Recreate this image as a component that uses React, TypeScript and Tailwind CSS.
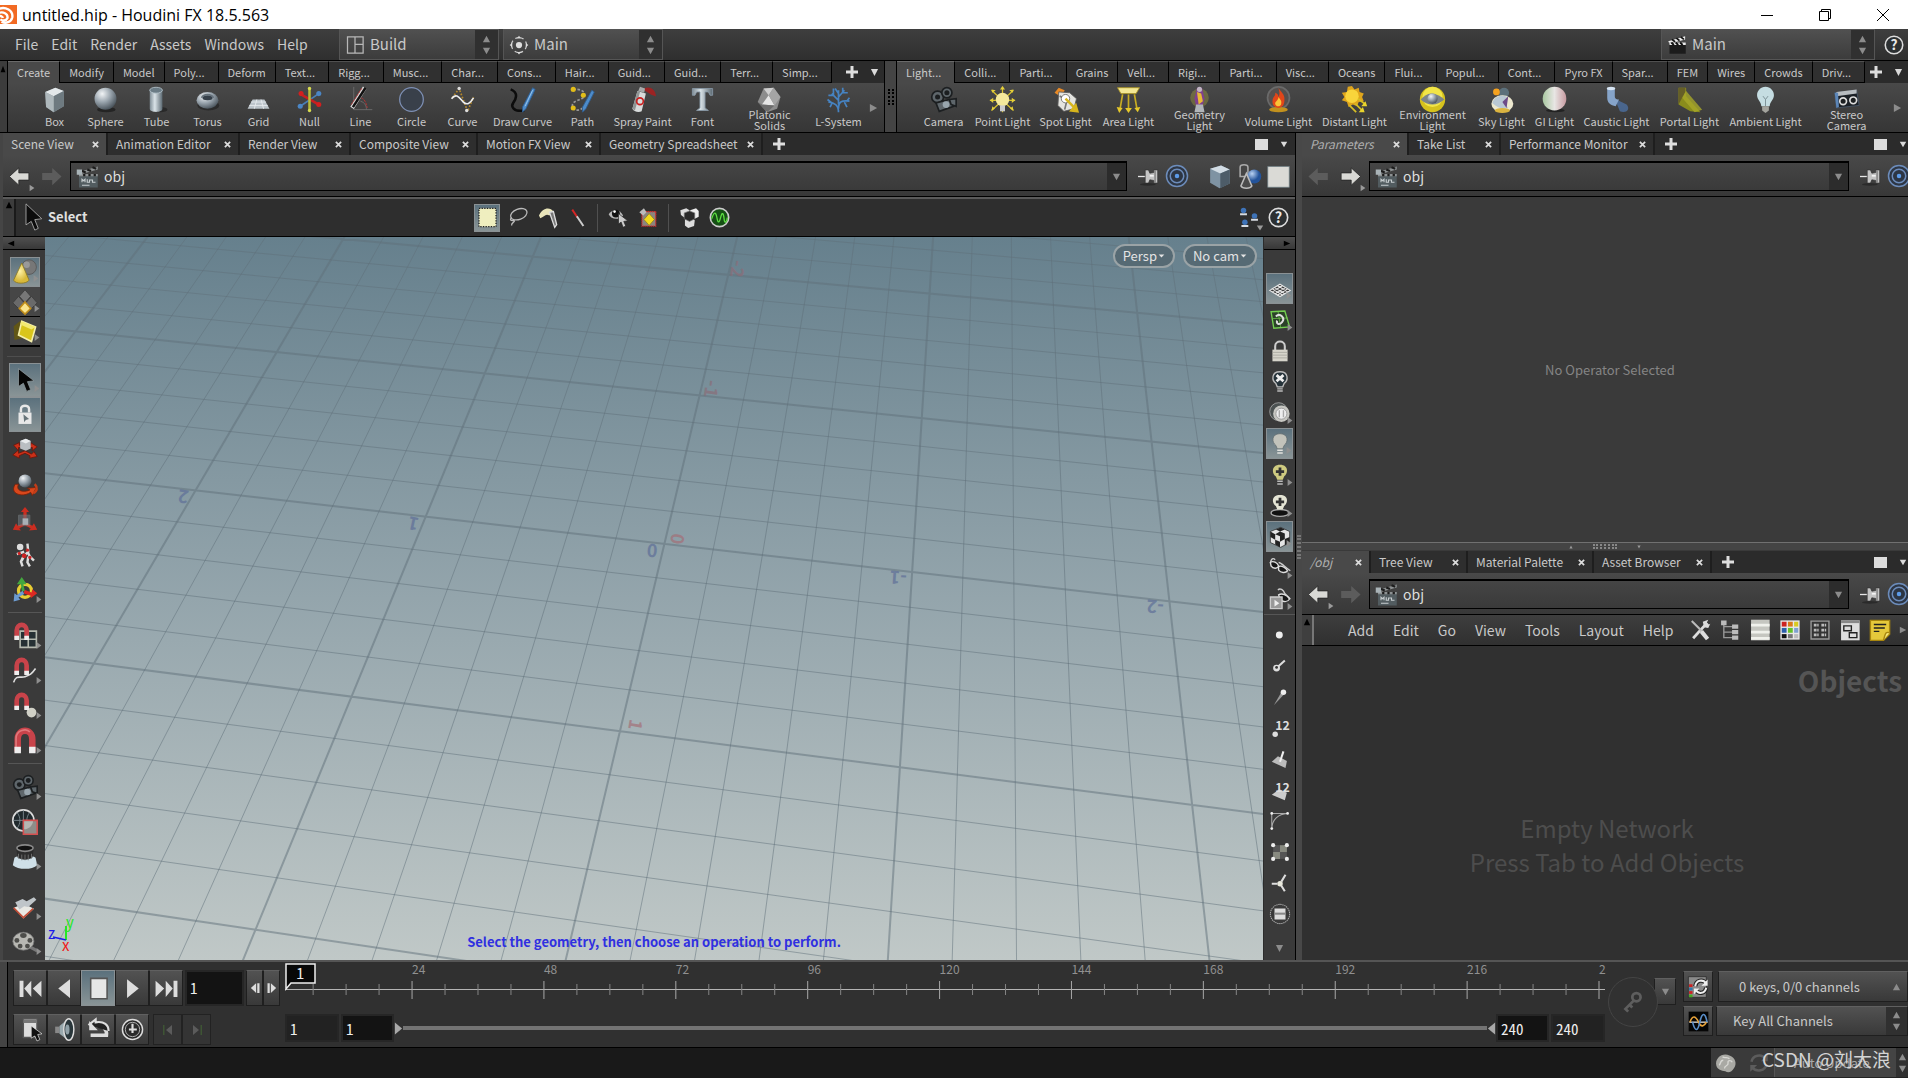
import { useState } from 'react';
import type { ReactNode } from 'react';

// Dibujos de 32x32, los degradados viven en <Defs />
const art: Record<string, ReactNode> = {
  box: (<><path d="M5 7 17 2l10 4v18l-12 7-9-6z" fill="#8c979c" /><path d="M5 7 17 2l10 4-12 6z" fill="#e3e8ea" /><path d="M15 12 27 6v18l-12 7z" fill="#6e7a80" /><path d="M5 7l10 5v19l-9-6z" fill="#aeb8bc" /></>),
  sphere: (<><ellipse cx="17" cy="28" rx="11" ry="3" fill="#242424" /><circle cx="16" cy="15" r="13" fill="url(#metal)" /></>),
  tube: (<><ellipse cx="20" cy="28" rx="9" ry="3" fill="#292929" /><path d="M8 5v22c0 5 15 5 15 0V5z" fill="url(#tubeg)" /><ellipse cx="15.5" cy="5" rx="7.5" ry="3.5" fill="#6a7b85" stroke="#b7c5cd" /></>),
  torus: (<><ellipse cx="17" cy="23" rx="13" ry="6" fill="#2b2b2b" /><ellipse cx="16" cy="17" rx="13" ry="10" fill="url(#metal)" /><ellipse cx="16" cy="14" rx="6" ry="3" fill="#36404a" /><path d="M9 14c2-5 12-5 14 0" stroke="#66727c" strokeWidth="2" fill="none" /></>),
  grid: (<><path d="M9 16h14l6 11H3z" fill="#bcc4ca" /><path d="M7 19h18M5 23h22M14 16l-3 11M19 16l3 11" stroke="#e8ecef" /></>),
  nul: (<><path d="M5 24 27 9" stroke="#4b7fb5" strokeWidth="2" /><path d="M6 10 27 22" stroke="#c62020" strokeWidth="3" /><path d="M16 2v27" stroke="#b9bd39" strokeWidth="3" /><g fill="#4b86c5"><circle cx="5" cy="24" r="3" /><circle cx="27" cy="9" r="3" /></g><g fill="#d31f1f"><circle cx="6" cy="9" r="3" /><circle cx="27" cy="22" r="3" /></g><circle cx="16" cy="3" r="2" fill="#d8dc4f" /><circle cx="16" cy="29" r="2" fill="#d8dc4f" /></>),
  line: (<><path d="M8 1v27h22M16 18c6 2 7 6 7 10" stroke="#707070" fill="none" /><path d="M6 26 21 2" stroke="#d8d8d8" strokeWidth="5" /><path d="M7 25 22 2" stroke="#111" strokeWidth="3" /><path d="M5 22 18 2M17 14c5 2 6 8 7 12" stroke="#c03030" fill="none" strokeDasharray="3 1" /></>),
  circle: (<circle cx="16" cy="16" r="14" fill="#39404a" stroke="#7e90b5" strokeWidth="1.5" />),
  curve: (<><path d="M4 14 12 3l10 27 7-17" stroke="#b5882a" strokeWidth="2" strokeDasharray="2 2" fill="none" /><path d="M3 15c6-8 10 0 14 4s8 2 12-5" stroke="#eee" strokeWidth="2" fill="none" /><g fill="#ddd"><circle cx="12" cy="3" r="2" /><circle cx="21" cy="29" r="2" /></g></>),
  draw: (<><path d="M2 4c10 4 6 12 3 16s0 11 13 9" stroke="#0c0c0c" strokeWidth="3" fill="none" /><path d="m28 2 3 2-11 23-4 4v-6z" fill="#4d8bc9" stroke="#2e5d90" /><path d="m28 5-9 19" stroke="#a3cdf0" /></>),
  path: (<><path d="M5 4c15-1 16 8 10 11s-14 4-10 12c4 3 10 1 12-2" stroke="#999" strokeWidth="2" fill="none" strokeDasharray="3 2" /><g fill="#e2bd18"><circle cx="5" cy="4" r="3" /><circle cx="17" cy="11" r="3" /><circle cx="5" cy="26" r="3" /></g><path d="m27 5 3 2-10 20-4 4v-6z" fill="#4d8bc9" stroke="#2e5d90" /></>),
  spray: (<><path d="M18 3c6-3 13 0 14 9-4 0-9-4-14-7z" fill="#b81818" opacity=".75" /><path d="m10 6 10 3-5 21c-4 2-10 0-11-3z" fill="#d9dcdc" /><path d="m10 6 3 1-6 22-3-2z" fill="#8f9595" /><path d="m13 1 6 2-1 5-7-2z" fill="#a8aaaa" /><circle cx="13" cy="18" r="4" fill="none" stroke="#c92020" strokeWidth="2" /></>),
  font: (<path d="M4 3h24v8h-3l-2-4h-4v19l4 3H9l4-3V7H9l-2 4H4z" fill="url(#tubeg)" stroke="#8a9aa8" />),
  platonic: (<><path d="m9 3 12-1 8 11-4 14-12 4L2 19z" fill="#8c8c8c" /><path d="m9 3 6 8 6-9z" fill="#cfcfcf" /><path d="M15 11 7 22l15 1z" fill="#e5e5e5" /><path d="m15 11 7 12 7-10-8-11z" fill="#a5a5a5" /><path d="m2 19 5 3 6 9zM7 22l6 9 9-8z" fill="#6c6c6c" /></>),
  lsystem: (<path d="M16 31c0-9-5-11-12-12M16 27c0-9 4-10 13-9M16 22V5m0 12-8-8m8 4 7-8M10 11H4m6 0V3m11 5h6m-6 0V2M9 19l-3 6m17-6 3 6M8 20 3 16m22 3 4-5M16 9l-4-6" stroke="#4683c2" strokeWidth="2" fill="none" />),
  camera: (<><g fill="#5e666b" stroke="#1c1f21" strokeWidth="2"><circle cx="9" cy="13" r="7" /><circle cx="20" cy="8" r="6" /><path d="m7 20 16-4 5 8-17 6z" /><path d="m23 16 8-1v9l-6-2z" /></g><circle cx="9" cy="13" r="3" fill="#1b1e20" /><circle cx="20" cy="8" r="3" fill="#1b1e20" /><circle cx="19" cy="22" r="4" fill="#98a5ad" /></>),
  pointlight: (<><path d="M16 1v30M3 5l26 24M29 5 3 29M1 17h30" stroke="#d9c22d" strokeWidth="1.5" /><g fill="#e5cf3a"><path d="m16 0 3 4h-6zM1 17l4-3v6zM31 17l-4-3v6zM3 4l5 1-4 3zM29 4l-5 1 4 3zM3 29l1-5 3 3zM29 29l-1-5-3 3z" /></g><circle cx="16" cy="16" r="8" fill="#f5e99b" /><path d="M13 23h6v7h-6z" fill="#ccc" /></>),
  spotlight: (<><path d="m3 8 5-6 7 3-4 8z" fill="#e98a26" /><path d="m8 7 13 1 8 7-3 12-12 3-7-7z" fill="#e4e4e0" stroke="#5c5c5c" /><path d="m9 12 9 4-3 12" stroke="#777" strokeWidth="2" fill="none" /><circle cx="16" cy="15" r="5" fill="#fff" stroke="#666" /><path d="m16 15 12 12m2 3-7-1 5-6z" stroke="#d7b51c" strokeWidth="3" fill="#edc925" /></>),
  arealight: (<><path d="M3 2h26l-4 7H7z" fill="#f4e894" stroke="#ad9622" /><path d="M9 10 6 27m10-17v18m7-18 3 17" stroke="#c7ac22" strokeWidth="2" /><path d="m2 25 7 1-4 6zM12 26h8l-4 6zM23 26l7-1-3 6z" fill="#e6c92b" /></>),
  geolight: (<><circle cx="16" cy="14" r="11" fill="#b8ae3f" opacity=".35" /><path d="M13 2h6l3 13-4 13h-5l-3-13z" fill="#7f408e" /><path d="m13 7 5 2 2 9-5 4z" fill="#e8b936" /><circle cx="16" cy="4" r="3" fill="#c0b5c4" /><path d="M12 22h8l2 9H10z" fill="#b1b5b9" /></>),
  volume: (<><circle cx="16" cy="14" r="14" fill="#6a6a6a" /><circle cx="16" cy="14" r="12" fill="#55504e" /><ellipse cx="16" cy="28" rx="11" ry="3" fill="#c2911e" /><path d="M16 2c2 5 8 7 7 15 0 6-3 9-7 9s-8-3-7-9c0-4 4-5 3-9 3 1 4 3 4 5 2-3 1-6 0-11z" fill="#e14619" /><path d="M16 13c3 4 4 5 3 9-1 3-6 3-7-1 0-3 4-4 4-8z" fill="#fbc337" /></>),
  distant: (<><path d="m13 0 3 4 5-2 1 5 5 2-2 4 2 5-6 1-2 5-5-2-5 3-2-6-6-2 3-4-3-5 6-1 1-6z" fill="#dfa51c" /><circle cx="13" cy="12" r="8" fill="#f9d53b" /><path d="m20 15 8 6M17 21l8 8M10 23l8 8" stroke="#d7c024" strokeWidth="2" /><path d="M31 24h-7l5-6zM28 31h-7l5-6z" fill="#e9d42d" /></>),
  environment: (<><circle cx="16" cy="16" r="15" fill="#d6c21d" /><circle cx="16" cy="13" r="12" fill="#f2e547" /><path d="M2 16c5-5 9-8 14-7s10 3 14 7c-5 4-9 6-14 6s-10-2-14-6z" fill="#7d8588" /><circle cx="16" cy="15" r="6" fill="url(#metal)" /></>),
  sky: (<><circle cx="19" cy="8" r="6" fill="#5c707b" /><circle cx="10" cy="7" r="4" fill="#f5a11e" /><ellipse cx="17" cy="21" rx="13" ry="10" fill="#ece8cf" /><path d="M5 20c3-9 12-10 18-7l-5 6 6 7c-7 2-12 0-19-6z" fill="#b9c8d4" /><path d="m17 19 7-7-2 14z" fill="#6d4b88" /><ellipse cx="17" cy="29" rx="9" ry="3" fill="#dbb440" /></>),
  gi: (<><ellipse cx="17" cy="29" rx="11" ry="2" fill="#222" /><circle cx="16" cy="15" r="14" fill="url(#gig)" /></>),
  caustic: (<><path d="m14 15 14 7c5 6-1 11-8 8z" fill="#4c6fa0" opacity=".8" /><path d="M5 3v11c0 6 4 9 10 10l4-8c-4 0-5-2-5-4V3z" fill="#86a4c9" /><ellipse cx="9.500" cy="3" rx="5" ry="2" fill="#d7e5f4" /></>),
  portal: (<><path d="M3 2h9v10l17 19-12-1L3 22z" fill="#8a8c1c" /><path d="M12 6 31 28l-9 3L4 10z" fill="#a8a829" opacity=".8" /><path d="M3 2h8v5l-8 15z" fill="#665f27" /></>),
  ambient: (<><path d="M16 1c6 0 10 5 10 10s-5 8-5 13H11c0-5-5-8-5-13S10 1 16 1z" fill="#c5dde2" /><path d="m13 12 3 4 3-4M16 16v8" stroke="#72868c" fill="none" /><path d="M12 24h8v5l-4 3-4-3z" fill="#a3a39d" /></>),
  stereo: (<><path d="M2 8 28 5l3 18-27 3z" fill="#1b2026" stroke="#49586a" /><path d="M4 7 28 4v5L4 12z" fill="#b7bcc0" /><path d="m2 8 4 0 1 17-3 1z" fill="#5c86b8" /><g fill="#1c1f21" stroke="#ddd" strokeWidth="2"><circle cx="12" cy="18" r="4" /><circle cx="24" cy="17" r="4" /></g></>),
  clapper: (<><path d="M2 10 29 2v4L4 13z" fill="#8d9192" /><path d="m8 8 5 2m2-4 5 2m2-5 5 2" stroke="#1c1c1c" strokeWidth="3" /><path d="M4 12h25v18H4z" fill="#525c60" /><path d="M4 12h25v3H4z" fill="#8d9192" /><path d="M1 6h7v7H1z" fill="#a9b3b7" /><path d="M11 12v3m7-3v3m7-3v3" stroke="#1c1c1c" strokeWidth="3" /><path d="M8 23v-4l2 2 2-2v4m3-4v4h3v-3h4v3h4M8 27h10" stroke="#c6ccce" strokeWidth="1.500" fill="none" /></>),
  clapperDark: (<><path d="M2 10 29 2v5L4 14z" fill="#eee" /><path d="m8 7 5 4m2-6 5 4m2-6 5 4" stroke="#111" strokeWidth="3" /><path d="M4 12h26v18H4z" fill="#1c1c1c" /><path d="M4 12h26v4H4z" fill="#eee" /><path d="m7 12 4 4m3-4 4 4m3-4 4 4" stroke="#111" strokeWidth="3" /></>),
  back: (<path d="M15 4v7h14v10H15v7L2 16z" fill="#d9d9d5" stroke="#222" />),
  forward: (<path d="M17 4v7H3v10h14v7l13-12z" fill="#d9d9d5" stroke="#222" />),
  backOff: (<path d="M15 4v7h14v10H15v7L2 16z" fill="#5c5c5c" />),
  forwardOff: (<path d="M17 4v7H3v10h14v7l13-12z" fill="#5c5c5c" />),
  pin: (<><ellipse cx="15" cy="28" rx="12" ry="2" fill="#2a2a2a" /><path d="M0 16h12" stroke="#e5e5e5" strokeWidth="2" /><path d="M11 6h5l2 5 6-1V6h6v20h-6v-4l-6-1-2 5h-5z" fill="#c4c4c4" stroke="#333" /><path d="M26 7v18" stroke="#333" strokeWidth="1" /><path d="M18 14h6v2h-6z" fill="#fff" /></>),
  target: (<g fill="none" stroke="#6c8cbb" strokeWidth="2"><circle cx="16" cy="16" r="14" fill="#2d3644" /><circle cx="16" cy="16" r="9" /><circle cx="16" cy="16" r="3" fill="#5c9be8" stroke="none" /></g>),
  cube: (<><path d="M4 6 18 2l11 5v18l-13 6L4 24z" fill="#7f93a3" /><path d="M4 6 18 2l11 5-12 5z" fill="#d2dce4" /><path d="M17 12 29 7v18l-12 6z" fill="#4d5c68" /></>),
  shapes: (<><path d="M4 4c0-4 10-4 10 0v12H4z" fill="#454545" stroke="#aaa" strokeWidth="2" /><circle cx="22" cy="16" r="9" fill="url(#blueg)" /><path d="m12 12 7 16c-2 4-12 4-14 0z" fill="#4b4b4b" stroke="#bbb" strokeWidth="2" /></>),
  white: (<path d="M1 2h30v29H1z" fill="#dadad6" stroke="#6a7b80" />),
  cursor: (<path d="M8 1v24l6-4 4 10 4-2-4-10 8-1z" fill="#0c0c0c" stroke="#aaa" />),
  boxSelect: (<path d="M3 2h26v28H3z" fill="#efeebf" stroke="#222" strokeWidth="2" strokeDasharray="2 2" />),
  lasso: (<><ellipse cx="18" cy="11" rx="13" ry="8" transform="rotate(-20 18 11)" fill="none" stroke="#bbb" strokeWidth="2" /><path d="M7 16c-6 7 6 3 4 6s-4 2-4 6" stroke="#bbb" strokeWidth="2" fill="none" /></>),
  brush: (<><path d="M3 13C8 1 20-1 25 7l-6 6c-6-4-8 2-14 4z" fill="#e9e5ba" /><path d="m19 8 6-1 5 20-3 4z" fill="#777" stroke="#ddd" strokeWidth="2" /></>),
  laser: (<><path d="m8 4 8 12" stroke="#d42525" strokeWidth="3" /><path d="m15 14 10 15" stroke="#ccc" strokeWidth="3" /></>),
  eye: (<><path d="M1 11c6-9 17-8 22 2-7 8-18 6-22-2z" fill="#bbb" /><circle cx="12" cy="10" r="6" fill="#111" /><circle cx="10" cy="7" r="2" fill="#fff" /><path d="M16 10v16l4-3 3 8 4-2-3-7 6-1z" fill="#ccc" stroke="#222" /></>),
  pick: (<><path d="M6 7h21v22H6z" fill="#8a8580" stroke="#d52b2b" strokeWidth="2" strokeDasharray="2 1" /><path d="m17 10 8 9-8 9-8-9z" fill="#f1d91c" stroke="#8a7416" /><path d="m2 8 7-6 4 6-5 5z" fill="#bbb" /></>),
  cubes: (<><path d="m2 5 9-3 5 3v9l-8 2-5-4z" fill="#ddd" /><path d="m17 5 9-3 4 4v9l-6 3-6-4z" fill="#eee" /><path d="m9 19 9-3 6 4-1 9-9 3-5-4z" fill="#ddd" /><path d="m8 9 8-3 8 3v9l-8 4-8-4z" fill="#2a2a2a" stroke="#777" /></>),
  wave: (<><circle cx="16" cy="16" r="14" fill="#154f14" stroke="#ccc" strokeWidth="2.500" /><path d="M4 18C7 9 10 5 12 16s4 7 6-1 4-6 5 3 4 5 5-2" fill="none" stroke="#5ddd42" strokeWidth="2" /></>),
  links: (<g fill="#d7dce2"><path d="M3 9h10v3H3zM19 17h10v3H19zM5 26h10v3H5z" /><g fill="#3e73b8"><circle cx="8" cy="5" r="4" /><circle cx="24" cy="13" r="4" /><circle cx="10" cy="22" r="4" /></g></g>),
  help: (<><circle cx="16" cy="16" r="14" fill="#2c3032" stroke="#ddd" strokeWidth="2.500" /><text x="16" y="24" textAnchor="middle" fontSize="22" fontWeight="700" fill="#e8e8e8">?</text></>),
  coneSphere: (<><circle cx="21" cy="10" r="9" fill="#777" stroke="#555" /><circle cx="18" cy="7" r="4" fill="#999" /><path d="m12 5 9 21c-3 5-17 5-19 0z" fill="url(#gold)" stroke="#8a7722" /></>),
  diamonds: (<g stroke="#3a3a3a"><path d="m16 1 7 8-7 8-7-8z" fill="#777" /><path d="m8 9 7 8-7 7-7-7zM24 9l7 8-7 7-7-7z" fill="#6a6a6a" /><path d="m16 16 7 8-7 7-7-7z" fill="#fae58c" stroke="#c08d1a" strokeWidth="2" /></g>),
  goldCube: (<><path d="M2 10 12 2l4 22-13 3z" fill="#615616" /><path d="m12 4 17 7-5 18-16-8z" fill="#d9c51c" stroke="#f5efac" strokeWidth="2" /><path d="m12 4 17 7-5 3-14-6z" fill="#f3ea72" /></>),
  pointer: (<path d="M8 2v22l6-4 4 10 5-2-4-10 8-1z" fill="#050505" stroke="#8a9599" />),
  lockPointer: (<><path d="M11 13V9c0-6 10-6 10 0v4" stroke="#e8e8e8" strokeWidth="3" fill="none" /><path d="M8 13h16v14H8z" fill="#e8e8e8" /><path d="m14 15 7 6-4 1-2 3z" fill="#68757a" /></>),
  move: (<><path d="M1 22 8 16v4l8-3 8 4 3-3 4 6-9 2v-3l-6-3-7 3v3zM2 10l7-3v3h14V7l8 5-6 5v-4H8v4z" fill="#ca3018" stroke="#6a150b" /><path d="m10 5 7-3 6 3v9l-6 3-7-3z" fill="#b9bec2" /><path d="m10 5 7 3 6-3-6-3z" fill="#e8ebed" /></>),
  rotate: (<><path d="M4 15c-8 12 9 17 19 10l2 4 5-10-11 1 3 2c-8 4-18 1-14-7z" fill="#d8471c" stroke="#7a2008" /><path d="M28 15c4 4 3 9-2 11" stroke="#c33d18" strokeWidth="3" fill="none" /><circle cx="16" cy="11" r="8" fill="url(#metal)" /></>),
  scale: (<><path d="m16 0 5 6h-3v9h-4V6h-3zM1 28l4-8 2 3 8-4 2 3-8 4 2 3zM31 28l-4-8-2 3-8-4-2 3 8 4-2 3z" fill="#cb2d20" /><path d="M8 10h14v13H8z" fill="#6b747b" opacity=".6" stroke="#7e8588" /><path d="M13 14h7v8h-7z" fill="#a8b0b6" /></>),
  pose: (<><circle cx="10" cy="6" r="4" fill="#ddd" /><path d="m19 2 1 10-5 5-3 6M19 12l3 6 5 5M15 12l-9 3M14 18l-3 6 2 6M20 18l-1 7 3 5" stroke="#ddd" strokeWidth="3" fill="none" /><g fill="#c22"><circle cx="19" cy="10" r="2" /><circle cx="15" cy="17" r="3" /><circle cx="9" cy="14" r="2" /><circle cx="22" cy="19" r="2" /></g></>),
  handles: (<><circle cx="16" cy="17" r="8" fill="none" stroke="#e7cd32" strokeWidth="4" /><path d="m12 0 6 9h-4l2 9-4-1-1-8H6z" fill="#43a63e" /><path d="m31 20-8 6v-3l-9-3 2-4 8 3 1-4z" fill="#dc2822" /><path d="m2 30 1-10 3 2 7-5 2 4-7 4 2 3z" fill="#6c9bd0" /></>),
  magGrid: (<><path d="M10 10h20v20H10zM20 10v20M10 20h20" stroke="#b4b8ae" strokeWidth="2" fill="#263034" /><g transform="scale(.72)"><path d="M8 27V13c0-13 17-13 17 0v14" stroke="#c8434a" strokeWidth="8" fill="none" /><path d="M4 22h8v7H4zM21 22h8v7h-8z" fill="#eee" /></g></>),
  magCurve: (<><path d="M2 30c3-10 8-5 14-7s8-3 13-10" stroke="#ddd" strokeWidth="2" fill="none" /><g transform="scale(.72)"><path d="M8 27V13c0-13 17-13 17 0v14" stroke="#c8434a" strokeWidth="8" fill="none" /><path d="M4 22h8v7H4zM21 22h8v7h-8z" fill="#eee" /></g></>),
  magPoint: (<><circle cx="24" cy="24" r="6" fill="#d0d0c6" /><g transform="scale(.72)"><path d="M8 27V13c0-13 17-13 17 0v14" stroke="#c8434a" strokeWidth="8" fill="none" /><path d="M4 22h8v7H4zM21 22h8v7h-8z" fill="#eee" /></g></>),
  magnet: (<><path d="M7 29V14c0-14 18-14 18 0v15" stroke="#c8434a" strokeWidth="8" fill="none" /><path d="M5 26V13C5 2 18 0 22 5" stroke="#e0787b" strokeWidth="2" fill="none" /><path d="M3 23h8v8H3zM21 23h8v8h-8z" fill="#eee" /></>),
  globe: (<><circle cx="14" cy="14" r="13" fill="#20292d" stroke="#ddd" strokeWidth="2" /><path d="M1 14h26M14 1v26M6 4c5 6 5 14 0 20M22 4c-5 6-5 14 0 20" stroke="#849197" fill="none" /><path d="M14 14h17v17H14z" fill="#8d8d89" stroke="#d45050" strokeWidth="2" /><path d="M15 15h11c-1 6-6 10-11 10z" fill="#b6b6b2" /></>),
  lens: (<><path d="M3 17c4-4 22-4 26 0l2 9c-6 6-24 6-30 0z" fill="#cfe0e8" /><path d="M5 5l2 12c5 3 13 3 18 0l2-12z" fill="#2c2c2c" /><path d="M8 12v6m4-5v7m4-7v7m4-7v7m4-8v6" stroke="#777" /><ellipse cx="16" cy="5" rx="10" ry="4" fill="#111" stroke="#888" strokeWidth="2" /></>),
  book: (<><path d="m2 17 13-5 12 6-13 12z" fill="#e9e9e4" /><path d="m2 17 12 12 12-11" stroke="#c04b35" strokeWidth="2" fill="none" /><path d="m4 10 9-4 5 3 9-5 3 3-10 9-5-1-6 4z" fill="#bfc5c9" /></>),
  reel: (<><path d="M22 22 31 27" stroke="#777" strokeWidth="4" /><ellipse cx="14" cy="15" rx="13" ry="11" fill="#b7b7b2" stroke="#777" /><g fill="#4d4d4a"><ellipse cx="14" cy="8" rx="4" ry="3" /><ellipse cx="6" cy="14" rx="3" ry="3" /><ellipse cx="22" cy="14" rx="3" ry="3" /><ellipse cx="10" cy="21" rx="3" ry="3" /><ellipse cx="19" cy="21" rx="3" ry="3" /></g></>),
  plane: (<><path d="m16 9 15 9-15 9-15-9z" fill="#3a3a3a" stroke="#e8e8e8" strokeWidth="1.500" /><path d="m12 11 15 9M8 14l15 9M5 16l15 9M20 11 5 20M24 14 9 23M27 16l-15 9" stroke="#e8e8e8" strokeWidth="1.500" /></>),
  snapGrid: (<><path d="m3 4 20-1 7 23-23 2z" fill="#2b4228" stroke="#73cf50" strokeWidth="2" /><path d="M13 3l4 24M5 14l22-1" stroke="#73cf50" /><path d="M10 11c6-6 14 2 9 8s-9 1-7-2" stroke="#ddd" strokeWidth="3" fill="none" /></>),
  lock: (<><path d="M9 15V9c0-9 14-9 14 0v6" stroke="#ccc" strokeWidth="3" fill="none" /><path d="M5 14h22v17H5z" fill="#d6d4ca" /><path d="M5 18h22M5 22h22M5 26h22" stroke="#9e9c94" /></>),
  bulbOff: (<><path d="M16 1c13 0 12 13 6 17l-2 5h-8l-2-5C4 14 3 1 16 1z" fill="#26333a" stroke="#bbb" strokeWidth="2" /><path d="m11 6 10 9M21 6 11 15" stroke="#eee" strokeWidth="4" /><path d="M12 26h8M12 29h8" stroke="#bbb" strokeWidth="2" /></>),
  headlight: (<><circle cx="14" cy="14" r="13" fill="#4c5252" stroke="#bbb" /><circle cx="18" cy="17" r="12" fill="#c7c7c2" /><circle cx="18" cy="17" r="8" fill="#eee" stroke="#888" /><path d="M15 12v10m6-10v10" stroke="#aaa" strokeWidth="2" /></>),
  bulb: (<><path d="M16 1c13 0 12 13 6 17l-2 5h-8l-2-5C4 14 3 1 16 1z" fill="#c2c3bb" stroke="#5a666b" /><path d="M12 25h8M12 29h8" stroke="#e2e2de" strokeWidth="2" /></>),
  bulbPlus: (<><path d="M16 1c13 0 12 13 6 17l-2 5h-8l-2-5C4 14 3 1 16 1z" fill="#cfcb80" /><path d="M16 5v12M10 11h12" stroke="#333" strokeWidth="4" /><path d="M12 25h8M12 29h8" stroke="#bbb" strokeWidth="2" /></>),
  bulbFloor: (<><ellipse cx="16" cy="26" rx="13" ry="5" fill="#111" stroke="#aaa" strokeWidth="2" /><path d="M16 0c13 0 12 12 6 16l-2 5h-8l-2-5C4 12 3 0 16 0z" fill="#e5e5d5" /><path d="M16 4v12M10 10h12" stroke="#333" strokeWidth="4" /></>),
  checker: (<><path d="M2 8 17 2l13 6v16l-13 7-15-7z" fill="#e4e4e4" stroke="#222" /><path d="m10 5 7-3 6 3-7 3zM2 8l7 4v8l-7-4zM9 20l7 3v8l-7-4zM16 15l7-4v8l-7 4zM23 19l7-3v8l-7 4zM9 12l7-4 7 3-7 4z" fill="#222" /></>),
  glasses: (<><path d="M2 9C3 2 6 1 9 4M14 8c4 0 9 7 17 12" stroke="#ccc" strokeWidth="2" fill="none" /><path d="M2 8c4-3 10 0 12 5-1 4-8 5-11 0z" fill="#161616" stroke="#ddd" strokeWidth="2" /><path d="M14 14c4-2 10 1 13 6-3 4-10 3-13-1z" fill="#161616" stroke="#ddd" strokeWidth="2" /></>),
  glassesPlay: (<><path d="M13 3c3-4 8 0 10 5l8 8" stroke="#ccc" strokeWidth="2" fill="none" /><path d="M14 10c5-3 12 0 16 6-3 5-10 5-14 0z" fill="#161616" stroke="#ddd" strokeWidth="2" /><path d="M2 13h17v17H2z" fill="#999" stroke="#ccc" strokeWidth="2" /><path d="m8 17 7 5-7 5z" fill="#eee" /></>),
  dot: (<circle cx="15" cy="16" r="5" fill="#eee" />),
  dotLine: (<><path d="m13 17 10-9" stroke="#ddd" strokeWidth="3" /><circle cx="11" cy="19" r="5" fill="#ddd" /><circle cx="11" cy="18" r="2" fill="#333" /></>),
  dotTail: (<><path d="m18 9 3 4L7 28z" fill="#999" /><circle cx="21" cy="9" r="4" fill="#eee" /></>),
  pointNum: (<><circle cx="9" cy="25" r="4" fill="#ddd" /><text x="9" y="19" fontSize="18" fontWeight="700" fill="#ddd">12</text></>),
  primNormal: (<><path d="m4 20 9-8 13 7-2 10z" fill="#bbb" /><path d="m16 20 5-15" stroke="#eee" strokeWidth="3" /></>),
  primNum: (<><path d="m4 23 11-8 11 5-3 11z" fill="#ccc" /><text x="9" y="19" fontSize="18" fontWeight="700" fill="#ddd">12</text></>),
  hull: (<><path d="M4 27V5h23M4 27C5 14 12 6 27 5" stroke="#aaa" strokeWidth="1.500" fill="none" /><g fill="#eee"><circle cx="4" cy="5" r="2" /><circle cx="27" cy="5" r="2" /><circle cx="4" cy="27" r="2" /></g></>),
  uv: (<><path d="M6 6h20v20H6z" fill="#555" /><path d="M16 6h10v10H16zM6 16h10v10H6z" fill="#888a80" /><g fill="#eee"><circle cx="6" cy="6" r="3" /><circle cx="26" cy="6" r="3" /><circle cx="6" cy="26" r="3" /><circle cx="26" cy="26" r="3" /></g></>),
  tripod: (<><path d="M4 17h8M18 14l6-10M18 20l5 8" stroke="#ddd" strokeWidth="3" /><circle cx="16" cy="17" r="4" fill="#e9e9dd" /></>),
  display: (<><circle cx="16" cy="16" r="14" fill="none" stroke="#aaa" strokeWidth="1.500" strokeDasharray="2 1" /><path d="M8 8h16v16H8z" fill="#ddd" /><path d="M8 14h16v3H8z" fill="#888" /></>),
  toolsX: (<><path d="M6 28 26 6" stroke="#ddd" strokeWidth="4" /><path d="m20 4 8-3-2 4 3 3 2-1-3 6-6-1z" fill="#ddd" /><path d="M4 3 16 15m-1-1 12 15" stroke="#bbb" strokeWidth="3" /><path d="m18 18 9 11" stroke="#ddd" strokeWidth="6" /></>),
  tree: (<><path d="M7 5v22h14M7 11h14M7 19h14" stroke="#999" strokeWidth="2" fill="none" /><path d="M3 2h8v7H3zM19 8h9v6h-9zM19 16h9v6h-9zM19 24h9v6h-9z" fill="#bbb" /></>),
  list: (<><path d="M3 1h27v30H3z" fill="#c5c6c0" /><path d="M3 7h27v4H3zM3 17h27v4H3zM3 26h27v4H3z" fill="#f0f1ec" /></>),
  palette: (<><path d="M2 2h28v28H2z" fill="#e8e8e8" /><path d="M4 4h7v7H4z" fill="#c22" /><path d="M13 4h7v7h-7z" fill="#d97a1b" /><path d="M22 4h6v7h-6z" fill="#d8ca21" /><path d="M4 13h7v7H4z" fill="#2c5faa" /><path d="M13 13h7v7h-7z" fill="#65c22a" /><path d="M22 13h6v7h-6z" fill="#7ea1d0" /><path d="M4 22h7v6H4z" fill="#111" /><path d="M13 22h7v6h-7z" fill="#777" /><path d="M22 22h6v6h-6z" fill="#bbb" /></>),
  netList: (<><path d="M3 3h26v26H3z" fill="#333" stroke="#999" strokeWidth="2" /><path d="M7 9h7m4 0h7M7 16h7m4 0h7M7 23h7m4 0h7" stroke="#bbb" strokeWidth="4" strokeDasharray="4 1" /></>),
  netBox: (<><path d="M3 2h27v29H3z" fill="#ddd" /><path d="M3 2h27v4H3z" fill="#888" /><path d="M7 10h11v7H7zM15 20h11v7H15z" fill="#ddd" stroke="#222" strokeWidth="2" /></>),
  sticky: (<><path d="M2 2h28v20l-9 9H2z" fill="#e5c93b" stroke="#a8860e" strokeWidth="2" /><path d="M7 8h18M7 13h16M7 18h8" stroke="#222" strokeWidth="2" /><path d="M30 20c-7-2-6 2-9 11" fill="#f5e67a" stroke="#a8860e" strokeWidth="2" /></>),
  ffStart: (<path d="M2 6h5v21H2zM17 6v21L8 16zM30 6v21l-11-11z" fill="#ddd" />),
  playBack: (<path d="M23 4v24L8 16z" fill="#ddd" />),
  stop: (<path d="M6 3h21v26H6z" fill="#e6e6e6" stroke="#555" strokeWidth="2" />),
  play: (<path d="M9 4v24l15-12z" fill="#ddd" />),
  ffEnd: (<path d="M25 6h5v21h-5zM15 6v21l9-11zM2 6v21l11-11z" fill="#ddd" />),
  stepBack: (<path d="M19 3v26L5 16zM22 3h6v26h-6z" fill="#ddd" />),
  stepFwd: (<path d="M13 3v26l14-13zM4 3h6v26H4z" fill="#ddd" />),
  keyPrev: (<><path d="M6 6h3v20H6z" fill="#3e5534" /><path d="M24 6v20L12 16z" fill="#5b5b5b" /></>),
  keyNext: (<><path d="M23 6h3v20h-3z" fill="#3e5534" /><path d="M8 6v20l12-10z" fill="#5b5b5b" /></>),
  panelPick: (<><path d="M6 1h19v26H6z" fill="#ddd" stroke="#555" strokeWidth="2" /><path d="M6 2h19v5H6z" fill="#777" /><path d="M17 11v17l5-3 3 7 4-2-3-7 6-1z" fill="#111" stroke="#ddd" /></>),
  speaker: (<><path d="M3 12h6v9H3z" fill="#888" /><path d="M9 11 21 1v30L9 22z" fill="#99a9ae" /><ellipse cx="22" cy="16" rx="7" ry="15" fill="#29363a" stroke="#ddd" strokeWidth="2" /><ellipse cx="20" cy="16" rx="3" ry="7" fill="#8fa0a7" /></>),
  loop: (<><path d="M5 24h22c1-9-5-14-14-13" stroke="#ddd" strokeWidth="5" fill="none" /><path d="M2 10 12 2v4c12-2 18 4 18 12" stroke="#ddd" strokeWidth="3" fill="#222" /><path d="M3 4v13h12z" fill="#ddd" /></>),
  clock: (<><circle cx="16" cy="16" r="14" fill="#2a2a2a" stroke="#ddd" strokeWidth="2" /><circle cx="16" cy="16" r="10" fill="none" stroke="#ddd" /><path d="M16 8v13M11 16h11" stroke="#ddd" strokeWidth="3" /></>),
  key: (<><circle cx="21" cy="9" r="6" fill="none" stroke="#5e5e5e" strokeWidth="4" /><path d="M17 14 5 26l4 4M11 20l4 4" stroke="#5e5e5e" strokeWidth="4" fill="none" /></>),
  channels: (<><path d="M2 1h26v30H2z" fill="#8a8a8a" stroke="#222" /><path d="M3 12h5v4H3z" fill="#c22" /><path d="M3 17h5v4H3z" fill="#37a" /><path d="M3 22h5v4H3z" fill="#c22" /><path d="M3 27h5v4H3z" fill="#4a2" /><path d="M12 15c1-9 11-11 16-4M28 17c-2 9-11 10-16 3" stroke="#222" strokeWidth="6" fill="none" /><path d="M12 15c1-9 11-11 16-4M28 17c-2 9-11 10-16 3" stroke="#eee" strokeWidth="3" fill="none" /><path d="M30 5v9h-9zM10 27v-9h8z" fill="#eee" /></>),
  scope: (<><path d="M1 1h30v30H1z" fill="#050505" /><path d="M2 17h28" stroke="#ddd" strokeWidth="2" /><path d="M3 17c4-12 9-9 13 0s9 6 12 0" stroke="#e8a33a" strokeWidth="2.500" fill="none" /><path d="M7 17c4 16 8 14 11 0s8-17 11 0" stroke="#5a8fca" strokeWidth="2.500" fill="none" /></>),
  brain: (<><path d="M2 20C-1 8 12 0 21 5c9 3 11 12 7 18-4 7-9 8-13 5-6-1-11-2-13-8z" fill="#a9a9a4" /><path d="M6 19c3-2 1-7 6-7m2 12c-1-5 6-3 5-8s5-4 6-1M11 7c3 3 7-1 10 3" stroke="#d8d8d4" strokeWidth="2" fill="none" /></>),
  refresh: (<><path d="M4 14C6 3 20 1 27 9M28 18C26 29 12 31 5 23" stroke="#5c5c5c" strokeWidth="4" fill="none" /><path d="M30 2v11H19zM2 30V19h11z" fill="#5c5c5c" /></>),
  desktop: (<path d="M4 3h25v26H4zM16 3v26M16 15h13" stroke="#b8b8b8" strokeWidth="2" fill="none" />),
  radial: (<><circle cx="16" cy="16" r="12" fill="none" stroke="#ccc" strokeWidth="2" strokeDasharray="14 5" strokeDashoffset="7" /><circle cx="16" cy="16" r="5" fill="#ddd" /><path d="m16 1 3 4h-6zM16 31l3-4h-6zM1 16l4-3v6zM31 16l-4-3v6z" fill="#ddd" /></>),
  logo: (<><path d="M0 0h32v32H0z" fill="#f26a23" /><path d="M0 7c13-6 26 3 24 14-2 8-11 11-18 7M0 14c9-4 17 1 16 8-2 5-9 5-12 2M0 20c3-3 8-1 8 2" stroke="#fff" strokeWidth="4" fill="none" /></>),
};

const Defs = () => (
  <svg className="absolute size-0" aria-hidden="true">
    <defs>
      <radialGradient id="metal" cx="35%" cy="28%" r="75%"><stop offset="0" stopColor="#f1f4f6" /><stop offset=".5" stopColor="#9ba6af" /><stop offset="1" stopColor="#4a545c" /></radialGradient>
      <radialGradient id="gold" cx="40%" cy="40%"><stop offset="0" stopColor="#fff3a8" /><stop offset="1" stopColor="#d8b93a" /></radialGradient>
      <radialGradient id="blueg" cx="35%" cy="30%"><stop offset="0" stopColor="#b9d2f2" /><stop offset="1" stopColor="#23539a" /></radialGradient>
      <linearGradient id="tubeg"><stop offset="0" stopColor="#7f8d96" /><stop offset=".4" stopColor="#dae3e8" /><stop offset="1" stopColor="#5c6a73" /></linearGradient>
      <linearGradient id="gig"><stop offset="0" stopColor="#a9c9a1" /><stop offset=".5" stopColor="#e8e6e4" /><stop offset="1" stopColor="#c79aa0" /></linearGradient>
      <linearGradient id="sky" x2="0" y2="1"><stop offset="0" stopColor="#66808d" /><stop offset=".5" stopColor="#94a5ac" /><stop offset="1" stopColor="#c0c8c7" /></linearGradient>
    </defs>
  </svg>
);

const Icon = ({ name, className = 'size-6' }: { name: string; className?: string }) => (
  <svg viewBox="0 0 32 32" className={`shrink-0 overflow-visible ${className}`} aria-hidden="true">{art[name]}</svg>
);

type Dir = 'up' | 'down' | 'left' | 'right';
const points: Record<Dir, string> = {
  up: '5,1 9,9 1,9',
  down: '1,1 9,1 5,9',
  left: '1,5 9,1 9,9',
  right: '1,1 9,5 1,9',
};

const Tri = ({ dir, className = 'size-2 fill-[#9a9a9a]' }: { dir: Dir; className?: string }) => (
  <svg viewBox="0 0 10 10" preserveAspectRatio="none" className={`shrink-0 ${className}`} aria-hidden="true">
    <polygon points={points[dir]} />
  </svg>
);

const Plus = () => (
  <svg viewBox="0 0 12 12" className="size-3" aria-hidden="true"><path d="M6 0v12M0 6h12" stroke="#dedede" strokeWidth="3" /></svg>
);

const Spinner = () => (
  <span className="flex flex-col items-center gap-1">
    <Tri dir="up" className="w-[9px] h-2 fill-[#8c8c8c]" />
    <Tri dir="down" className="w-[9px] h-2 fill-[#8c8c8c]" />
  </span>
);

const shelves = [
  {
    tabs: ['Create', 'Modify', 'Model', 'Poly...', 'Deform', 'Text...', 'Rigg...', 'Musc...', 'Char...', 'Cons...', 'Hair...', 'Guid...', 'Guid...', 'Terr...', 'Simp...'],
    tools: [
      ['Box', 'box', 'w-[51px]'], ['Sphere', 'sphere', 'w-[51px]'], ['Tube', 'tube', 'w-[51px]'], ['Torus', 'torus', 'w-[51px]'],
      ['Grid', 'grid', 'w-[51px]'], ['Null', 'nul', 'w-[51px]'], ['Line', 'line', 'w-[51px]'], ['Circle', 'circle', 'w-[51px]'],
      ['Curve', 'curve', 'w-[51px]'], ['Draw Curve', 'draw', 'w-[69px]'], ['Path', 'path', 'w-[51px]'], ['Spray Paint', 'spray', 'w-[69px]'],
      ['Font', 'font', 'w-[51px]'], ['Platonic Solids', 'platonic', 'w-[83px]'], ['L-System', 'lsystem', 'w-[55px]'],
    ],
  },
  {
    tabs: ['Light...', 'Colli...', 'Parti...', 'Grains', 'Vell...', 'Rigi...', 'Parti...', 'Visc...', 'Oceans', 'Flui...', 'Popul...', 'Cont...', 'Pyro FX', 'Spar...', 'FEM', 'Wires', 'Crowds', 'Driv...'],
    tools: [
      ['Camera', 'camera', 'w-[55px]'], ['Point Light', 'pointlight', 'w-[63px]'], ['Spot Light', 'spotlight', 'w-[63px]'], ['Area Light', 'arealight', 'w-[63px]'],
      ['Geometry Light', 'geolight', 'w-[79px]'], ['Volume Light', 'volume', 'w-[79px]'], ['Distant Light', 'distant', 'w-[73px]'], ['Environment Light', 'environment', 'w-[83px]'],
      ['Sky Light', 'sky', 'w-[55px]'], ['GI Light', 'gi', 'w-[51px]'], ['Caustic Light', 'caustic', 'w-[73px]'], ['Portal Light', 'portal', 'w-[73px]'],
      ['Ambient Light', 'ambient', 'w-[79px]'], ['Stereo Camera', 'stereo', 'w-[83px]'],
    ],
  },
];

const twoLines = ['Platonic Solids', 'Geometry Light', 'Environment Light', 'Stereo Camera'];

const Shelf = ({ index, className }: { index: number; className: string }) => {
  const [active, setActive] = useState(0);
  const { tabs, tools } = shelves[index];
  return (
    <div className={`flex flex-col min-w-0 ${className}`}>
      <div className="flex h-[22px] bg-[#232323] text-[11px]">
        {tabs.map((tab, i) => (
          <button
            key={i}
            onClick={() => setActive(i)}
            className={`border-t border-r border-r-black pl-[9px] whitespace-nowrap ${tab.endsWith('...') ? 'pr-[13px]' : 'pr-[9px]'} ${
              active === i ? 'bg-[#494949] border-t-[#6a6a6a]' : 'bg-[#303030] border-t-[#505050] border-b border-b-black'
            }`}
          >
            {tab}
          </button>
        ))}
        <div className="grow flex items-center justify-end gap-[12px] pr-[5px] bg-[#2b2b2b]">
          <button aria-label="Add shelf"><Plus /></button>
          <button aria-label="Shelf menu"><Tri dir="down" className="size-[9px] fill-[#dadada]" /></button>
        </div>
      </div>
      <div className="grow flex bg-linear-to-b from-[#494949] to-[#363636]">
        <div className={`flex grow ${index === 0 ? 'pl-[21px]' : 'pl-[19px]'}`}>
          {tools.map(([label, icon, width]) => (
            <button key={label} className={`flex flex-col items-center pt-[3px] text-[11px] shrink-0 ${width}`}>
              <Icon name={icon} className="size-[27px]" />
              {twoLines.includes(label) ? (
                <span className="leading-[11px] -mt-1 w-min">{label}</span>
              ) : (
                <span className="leading-[17px] whitespace-nowrap">{label}</span>
              )}
            </button>
          ))}
        </div>
        <button aria-label="More tools" className="w-4 pl-px"><Tri dir="right" className="w-[9px] h-[10px] fill-[#8c8c8c]" /></button>
      </div>
    </div>
  );
};

const PaneTabs = ({ tabs, side }: { tabs: string[][]; side?: boolean }) => {
  const [active, setActive] = useState(0);
  return (
    <div className="flex h-[22px] shrink-0 bg-[#2b2b2b] text-[12px]">
      {tabs.map(([tab, width], i) => (
        <div
          key={tab}
          className={`flex items-center justify-between pl-2 pr-[7px] border-r-2 border-[#1e1e1e] ${width} ${active === i ? 'bg-[#494949]' : 'bg-[#2e2e2e]'}`}
        >
          <button onClick={() => setActive(i)} className={`whitespace-nowrap ${side && i === 0 ? 'italic text-[#b0b0b0]' : ''}`}>{tab}</button>
          <button aria-label={`Close ${tab}`}>
            <svg viewBox="0 0 8 8" className="size-[7px]"><path d="m1 1 6 6M7 1 1 7" stroke="#dcdcdc" strokeWidth="2" /></svg>
          </button>
        </div>
      ))}
      <button aria-label="New pane tab" className="px-[10px]"><Plus /></button>
      <div className={`ml-auto flex items-center gap-3 ${side ? 'pr-px' : 'pr-[7px]'}`}>
        <button aria-label="Maximize pane" className="w-[13px] h-[11px] bg-[#dcdcdc]" />
        <button aria-label="Pane menu"><Tri dir="down" className="w-2 h-[7px] fill-[#dadada]" /></button>
      </div>
    </div>
  );
};

const PathBar = ({ arrows, children }: { arrows: string[]; children?: ReactNode }) => {
  const [path, setPath] = useState('obj');
  return (
    <div className="flex items-center h-[42px] shrink-0 pt-px bg-linear-to-b from-[#494949] to-[#383838] border-b border-black">
      <div className="flex w-[67px] gap-[9px] pl-[5px]">
        {arrows.map((a) => (
          <button key={a} aria-label={a} className="relative">
            <Icon name={a} className="size-[23px]" />
            {!a.endsWith('Off') && <Tri dir="right" className="absolute -right-1 -bottom-1 w-[6px] h-2 fill-[#9a9a9a]" />}
          </button>
        ))}
      </div>
      <div className="grow flex items-center h-[30px] border border-black border-t-2 bg-linear-to-b from-[#454545] to-[#3a3a3a] pl-[5px] min-w-0">
        <Icon name="clapper" className="size-6" />
        <input aria-label="Network path" value={path} onChange={(e) => setPath(e.target.value)} className="grow min-w-0 bg-transparent px-1 text-[14px] text-[#dedede] outline-none" />
        <button aria-label="Path history" className="h-full w-[19px] bg-[#2c2c2c] flex items-center justify-center"><Tri dir="down" className="w-[9px] h-2 fill-[#8c8c8c]" /></button>
      </div>
      {children}
    </div>
  );
};

const PinTarget = () => (
  <>
    <button aria-label="Pin" className="ml-[11px]"><Icon name="pin" className="size-[21px]" /></button>
    <button aria-label="Follow selection" className="ml-[6px]"><Icon name="target" className="size-6" /></button>
  </>
);

// Convierte coordenadas del plano de referencia a la vista en perspectiva
const project = (s: number, v: number) => {
  const w = 1 - 0.01856 * s - 0.1159 * v;
  return [(230.8 * s - 116.3 * v + 664.4) / w, (17.6 * s + 102.65 * v + 543.8) / w];
};

const gridLine = (s1: number, v1: number, s2: number, v2: number) => {
  const [x1, y1] = project(s1, v1);
  const [x2, y2] = project(s2, v2);
  return `M${x1} ${y1}L${x2} ${y2}`;
};

const steps = Array.from({ length: 71 }, (_, i) => i - 35);
const isMajor = (i: number) => i % 5 === 0;
const planeLines = (major: boolean) =>
  steps
    .filter((i) => isMajor(i) === major)
    .map((i) => gridLine(i / 5, -7, i / 5, 4) + (i <= 20 ? gridLine(-7, i / 5, 7, i / 5) : ''))
    .join('');

const axisLabels = [
  ['2', 183, 498, 190, '#5f6f98'], ['1', 413, 525, 192, '#5f6f98'], ['0', 652, 552, 185, '#5f6f98'], ['-1', 898, 579, 184, '#5f6f98'], ['-2', 1155, 608, 184, '#5f6f98'],
  ['-2', 739, 269, 98, '#8a6d78'], ['-1', 713, 389, 98, '#8a6d78'], ['0', 679, 539, 98, '#a37078'], ['1', 637, 725, 100, '#a37078'],
] as const;

const Viewport = () => (
  <div className="relative grow min-w-0 overflow-hidden">
    <svg viewBox="45 237 1218 723" preserveAspectRatio="xMidYMid slice" className="absolute inset-0 size-full" aria-label="Perspective view">
      <path d="M45 237h1218v723H45z" fill="url(#sky)" />
      <path d={planeLines(false)} stroke="#5f707a" strokeWidth="1" fill="none" opacity=".5" />
      <path d={planeLines(true)} stroke="#5f707a" strokeWidth="2" fill="none" opacity=".5" />
      {axisLabels.map(([t, x, y, r, color], i) => (
        <text key={i} x={x} y={y} fontSize="18" fontWeight="700" fill={color} opacity=".7" textAnchor="middle" dominantBaseline="central" transform={`rotate(${r} ${x} ${y})`}>{t}</text>
      ))}
      <path d="M66 940V926" stroke="#25e825" strokeWidth="2" />
      <path d="M66 940 53 937" stroke="#1c1ce8" strokeWidth="1.500" />
      <g fontSize="15"><text x="66" y="928" fill="#25e825">y</text><text x="48" y="939" fill="#1c1ce8">z</text><text x="62" y="951" fill="#f01818">x</text></g>
    </svg>
    <div className="absolute top-[7px] right-[6px] flex gap-2 text-[13px] text-[#e4e4e4]">
      {['Persp', 'No cam'].map((label) => (
        <button key={label} className="flex items-center gap-px h-6 px-2 rounded-full border-2 border-[#9aa3a6] bg-[#566a74]">
          {label}
          <Tri dir="down" className="w-[7px] h-1 fill-[#e4e4e4]" />
        </button>
      ))}
    </div>
    <p className="absolute inset-x-0 bottom-[8px] text-center text-[13px] leading-5 font-bold text-[#3030e0]">Select the geometry, then choose an operation to perform.</p>
  </div>
);

const leftGroups = [
  ['move', 'rotate', 'scale', 'pose', 'handles', '-', 'magGrid', 'magCurve', 'magPoint', 'magnet', '-', 'camera', 'globe', 'lens'],
  ['book', 'reel'],
];
const noCorner = ['move', 'rotate', 'scale', 'pose', 'globe', 'lock', 'bulbOff', 'lockPointer', 'dot', 'dotLine', 'dotTail', 'pointNum', 'primNormal', 'primNum', 'hull', 'uv', 'tripod', 'display'];
const lit = 'bg-linear-to-b from-[#5b717d] to-[#899496] border border-[#8a9194]';

const ToolButton = ({ name, className, size = 'size-[26px]' }: { name: string; className: string; size?: string }) => (
  <button aria-label={name} className={`relative flex items-center justify-center shrink-0 ${className}`}>
    <Icon name={name} className={size} />
    {!noCorner.includes(name) && <Tri dir="right" className="absolute right-0 bottom-[3px] w-[6px] h-[9px] fill-[#8f8f8f]" />}
  </button>
);

const LeftTools = () => (
  <div className="flex flex-col w-[42px] shrink-0 bg-[#3a3a3a]">
    <button aria-label="Collapse toolbar" className="h-[13px] shrink-0 pl-1 bg-linear-to-b from-[#505050] to-[#383838] border-b border-black"><Tri dir="left" className="w-2 h-[7px] fill-black" /></button>
    <div className="mt-[7px] ml-[7px] mr-[5px] flex flex-col">
      <ToolButton name="coneSphere" className={`h-[30px] ${lit}`} />
      <ToolButton name="diamonds" className="h-[30px] bg-[#464646] border-b border-black" />
      <ToolButton name="goldCube" className="h-[30px] bg-[#464646] border-b-2 border-black" />
    </div>
    <hr className="mt-[9px] mb-[6px] mx-1 border-[#4e4e4e]" />
    <div className="ml-[6px] mr-[4px] flex flex-col">
      <ToolButton name="pointer" className={`h-[34px] ${lit}`} />
      <ToolButton name="lockPointer" className={`h-[35px] ${lit}`} />
    </div>
    {leftGroups.map((group, g) => (
      <div key={g} className={`flex flex-col pl-[5px] pr-[3px] ${g ? 'mt-[15px]' : ''}`}>
        {group.map((name, i) =>
          name === '-' ? <hr key={i} className="my-[5px] border-[#565656]" /> : <ToolButton key={i} name={name} className="h-[35px]" />
        )}
      </div>
    ))}
  </div>
);

const rightTools = ['plane', 'snapGrid', 'lock', 'bulbOff', 'headlight', 'bulb', 'bulbPlus', 'bulbFloor', 'checker', 'glasses', 'glassesPlay', '-', 'dot', 'dotLine', 'dotTail', 'pointNum', 'primNormal', 'primNum', 'hull', 'uv', 'tripod', 'display'];

const RightTools = () => (
  <div className="flex flex-col w-8 shrink-0 bg-[#3a3a3a] border-l border-[#2c2c2c]">
    <button aria-label="Collapse display options" className="h-[13px] shrink-0 mb-[23px] flex justify-end items-center pr-1 bg-linear-to-b from-[#505050] to-[#383838] border-b border-black"><Tri dir="right" className="w-2 h-[7px] fill-black" /></button>
    {rightTools.map((name, i) =>
      name === '-' ? (
        <hr key={i} className="mb-[4px] border-[#565656]" />
      ) : (
        <ToolButton key={i} name={name} size="size-[22px]" className={`h-[31px] mx-[2px] ${['plane', 'bulb', 'checker'].includes(name) ? lit : ''}`} />
      )
    )}
    <button aria-label="More display options" className="mx-auto mt-[15px]"><Tri dir="down" className="size-[9px] fill-[#8c8c8c]" /></button>
  </div>
);

const selectTools = ['boxSelect', 'lasso', 'brush', 'laser', '|', 'eye', 'pick', '|', 'cubes', 'wave'];

const SelectBar = () => (
  <div className="flex h-10 shrink-0 items-center bg-[#2e2e2e] border-t-2 border-[#5a5a5a] border-b border-b-black">
    <button aria-label="Collapse bar" className="self-stretch w-[13px] flex justify-center pt-[2px] bg-[#3c3c3c] border-r-2 border-[#1a1a1a]"><Tri dir="up" className="size-2 fill-black" /></button>
    <button className="flex items-center gap-px pl-[3px] pb-[2px] text-[13px] leading-6 font-bold text-[#e0e0e0]"><Icon name="cursor" className="size-7" />Select</button>
    <div className="grow flex items-center justify-center gap-[4px] pr-[119px]">
      {selectTools.map((t, i) =>
        t === '|' ? (
          <span key={i} className="w-px h-7 mx-[3px] bg-[#505050]" />
        ) : (
          <button key={i} aria-label={t} className={`w-[26px] h-7 flex items-center justify-center ${t === 'boxSelect' ? lit : ''}`}><Icon name={t} className="size-[21px]" /></button>
        )
      )}
    </div>
    <button aria-label="Handle links" className="relative">
      <Icon name="links" className="size-[22px]" />
      <Tri dir="down" className="absolute -right-1 -bottom-[2px] w-2 h-[6px] fill-[#9a9a9a]" />
    </button>
    <button aria-label="Help" className="ml-2 mr-[6px]"><Icon name="help" className="size-[21px]" /></button>
  </div>
);

const MenuSelect = ({ icon, label, className }: { icon: string; label: string; className: string }) => (
  <label className={`flex items-center h-full bg-linear-to-b from-[#505050] to-[#3c3c3c] border border-[#555] ${className}`}>
    <Icon name={icon} className="size-5 ml-[5px]" />
    <select aria-label={icon} className="grow appearance-none bg-transparent pl-[5px] text-[15px] outline-none"><option>{label}</option></select>
    <span className="w-[23px] h-full flex items-center justify-center bg-[#303030]"><Spinner /></span>
  </label>
);

const frames = Array.from({ length: 40 }, (_, i) => (i + 1) * 6);
const transport = ['ffStart', 'playBack', 'stop', 'play', 'ffEnd'];
const raised = 'bg-linear-to-b from-[#525252] to-[#393939] border border-[#1f1f1f] border-t-[#606060]';

const FrameInput = ({ name, value, className }: { name: string; value: string; className: string }) => (
  <input aria-label={name} defaultValue={value} className={`px-[3px] min-w-0 font-['Noto_Sans_Mono_CJK_SC','Noto_Sans_CJK_SC',sans-serif] text-[15px] text-[#eee] border-2 border-[#262626] outline-none ${className}`} />
);

const PlayBar = () => (
  <div className="flex h-[88px] shrink-0 bg-[#303030] border-t-2 border-[#555] border-b border-b-black">
    <div className="w-2 shrink-0 bg-[#444] border-r border-black" />
    <div className="flex flex-col shrink-0 w-[277px] pl-[5px] pt-2">
      <div className="flex h-9">
        {transport.map((t) => (
          <button key={t} aria-label={t} className={`w-[34px] flex items-center justify-center ${t === 'stop' ? lit : raised}`}><Icon name={t} className="size-[25px]" /></button>
        ))}
        <FrameInput name="Current frame" value="1" className="w-[59px] mx-[2px] bg-[#131313]" />
        {['stepBack', 'stepFwd'].map((t) => (
          <button key={t} aria-label={t} className={`w-[17px] flex items-center justify-center ${raised}`}><Icon name={t} className="size-3" /></button>
        ))}
      </div>
      <div className="flex h-[31px] mt-2">
        {['panelPick', 'speaker', 'loop', 'clock'].map((t) => (
          <button key={t} aria-label={t} className={`w-[34px] flex items-center justify-center ${raised}`}><Icon name={t} className="size-[23px]" /></button>
        ))}
        {['keyPrev', 'keyNext'].map((t, i) => (
          <button key={t} aria-label={t} className={`w-[29px] flex items-center justify-center bg-[#343434] border border-[#222] ${i ? '' : 'ml-1'}`}><Icon name={t} className="size-4" /></button>
        ))}
      </div>
    </div>
    <div className="grow flex flex-col min-w-0">
      <svg className="w-full h-[51px] overflow-visible" aria-label="Timeline">
        <line x1="0" x2="100%" y1="27.5" y2="27.5" stroke="#b4b4b4" />
        {frames.map((f) => {
          const x = `${(f - 1) * 0.4163 + 0.05}%`;
          const big = f % 24 === 0;
          return (
            <g key={f}>
              <line x1={x} x2={x} y1={big ? 19 : 22} y2={big ? 37 : 33} stroke={big ? '#a8a8a8' : '#858585'} />
              {big && <text x={x} y="12" fontSize="12" fill="#909090">{f === 240 ? '2' : f}</text>}
            </g>
          );
        })}
        <path d="M1 27V2h29v19H6z" fill="#080808" stroke="#eee" strokeWidth="1.500" />
        <text x="11" y="17" fontSize="15" fill="#eee">1</text>
      </svg>
      <div className="flex items-center h-[30px]">
        <FrameInput name="Global start" value="1" className="w-[54px] h-7 bg-[#222]" />
        <FrameInput name="Range start" value="1" className="w-[53px] h-7 ml-[2px] bg-[#131313]" />
        <button aria-label="Range start handle"><Tri dir="right" className="w-[9px] h-[15px] fill-[#a8a8a8]" /></button>
        <div className="grow h-1 bg-[#737373]" />
        <button aria-label="Range end handle"><Tri dir="left" className="w-[9px] h-[15px] fill-[#a8a8a8]" /></button>
        <FrameInput name="Range end" value="240" className="w-[53px] h-7 bg-[#131313]" />
        <FrameInput name="Global end" value="240" className="w-[54px] h-7 ml-[2px] bg-[#222]" />
      </div>
    </div>
    <div className="flex items-center shrink-0 w-[73px] pl-[3px] mb-[8px] mt-[2px]">
      <button aria-label="Set key" className="relative size-[50px] shrink-0 rounded-full border border-[#444] bg-[#313131] flex items-center justify-center"><Icon name="key" className="size-[22px]" /></button>
      <button aria-label="Key options" className={`h-[27px] w-[22px] shrink-0 -ml-[4px] mb-[20px] flex items-center justify-center ${raised}`}><Tri dir="down" className="w-[9px] h-2 fill-[#8c8c8c]" /></button>
    </div>
    <div className="shrink-0 w-[230px] flex flex-col gap-1 pl-[5px] pt-[9px] text-[13px]">
      <div className="flex h-[31px]">
        <button aria-label="Update channels" className={`w-[30px] flex items-center justify-center ${raised}`}><Icon name="channels" className="size-[22px]" /></button>
        <button className={`grow ml-[5px] flex items-center justify-between pl-[20px] pr-[6px] ${raised}`}>0 keys, 0/0 channels<Tri dir="up" className="w-[9px] h-2 fill-[#8c8c8c]" /></button>
      </div>
      <div className="flex h-[30px]">
        <button aria-label="Channel graph" className={`w-[30px] flex items-center justify-center ${raised}`}><Icon name="scope" className="size-[21px]" /></button>
        <label className={`grow ml-[3px] flex items-center ${raised}`}>
          <select aria-label="Key mode" className="grow appearance-none bg-transparent pl-4 outline-none"><option>Key All Channels</option></select>
          <span className="w-[21px] h-full flex items-center justify-center bg-[#303030]"><Spinner /></span>
        </label>
      </div>
    </div>
  </div>
);

const StatusBar = () => (
  <footer className="flex h-[30px] shrink-0 justify-end bg-[#191919]">
    <div className="relative w-[197px] flex items-center pl-[4px] bg-[#3a3a3a] border-b border-[#222]">
      <button aria-label="Cook state"><Icon name="brain" className="size-[22px]" /></button>
      <button aria-label="Refresh" className="ml-[12px]"><Icon name="refresh" className="size-5" /></button>
      <label className="grow h-full ml-[5px] flex items-center bg-[#444] border-l border-[#555]">
        <select aria-label="Update mode" className="grow appearance-none bg-transparent pl-[19px] text-[13px] text-[#a8a8a8] outline-none"><option>Auto Update</option></select>
        <span className="w-3 h-full flex items-center justify-center bg-[#303030]"><Spinner /></span>
      </label>
      <span className="absolute right-[17px] -top-[2px] whitespace-nowrap text-[19px] leading-[26px] text-[#d4d4d4] pointer-events-none">CSDN @刘大浪</span>
    </div>
  </footer>
);

const ScenePane = () => (
  <div className="flex flex-col grow min-w-0 border-l-[3px] border-[#454545] border-r border-r-black">
    <PaneTabs
      tabs={[['Scene View', 'w-[105px]'], ['Animation Editor', 'w-[132px]'], ['Render View', 'w-[111px]'], ['Composite View', 'w-[127px]'], ['Motion FX View', 'w-[123px]'], ['Geometry Spreadsheet', 'w-[162px]']]}
    />
    <PathBar arrows={['back', 'forwardOff']}>
      <PinTarget />
      <button aria-label="Cube" className="ml-[18px]"><Icon name="cube" className="size-[25px]" /></button>
      <button aria-label="Shapes" className="ml-[5px]"><Icon name="shapes" className="size-[25px]" /></button>
      <button aria-label="Background" className="ml-[5px] mr-[5px]"><Icon name="white" className="size-[23px]" /></button>
    </PathBar>
    <SelectBar />
    <div className="flex grow min-h-0">
      <LeftTools />
      <Viewport />
      <RightTools />
    </div>
  </div>
);

const netIcons = ['toolsX', 'tree', 'list', 'palette', 'netList', 'netBox', 'sticky'];

const SidePanes = () => (
  <div className="flex flex-col w-[606px] shrink-0 overflow-hidden">
    <PaneTabs side tabs={[['Parameters', 'w-[107px]'], ['Take List', 'w-[92px]'], ['Performance Monitor', 'w-[154px]']]} />
    <div className="mr-[-3px]"><PathBar arrows={['backOff', 'forward']}><PinTarget /></PathBar></div>
    <div className="h-[345px] shrink-0 flex items-center justify-center pl-[10px] text-[13px] text-[#858585] bg-[#3a3a3a]">No Operator Selected</div>
    <div className="h-[9px] shrink-0 flex items-center justify-center gap-5 bg-[#444] border-t border-[#707070] border-b border-b-[#3a3a3a]">
      <Tri dir="up" className="size-1 fill-[#999]" />
      <span className="w-6 h-[5px] border-y-2 border-dotted border-[#888]" />
      <Tri dir="down" className="size-1 fill-[#999]" />
    </div>
    <PaneTabs side tabs={[['/obj', 'w-[69px]'], ['Tree View', 'w-[97px]'], ['Material Palette', 'w-[126px]'], ['Asset Browser', 'w-[118px]']]} />
    <div className="mr-[-3px]"><PathBar arrows={['back', 'forwardOff']}><PinTarget /></PathBar></div>
    <div className="flex items-center h-[31px] shrink-0 bg-linear-to-b from-[#3e3e3e] to-[#303030] border-b border-black text-[14px]">
      <button aria-label="Collapse menu" className="self-stretch w-3 flex justify-center pt-[3px] bg-[#3f3f3f] border-r-2 border-[#777]"><Tri dir="up" className="size-2 fill-black" /></button>
      <nav className="flex gap-[19px] pl-[34px]">
        {['Add', 'Edit', 'Go', 'View', 'Tools', 'Layout', 'Help'].map((m) => <button key={m}>{m}</button>)}
      </nav>
      <div className="ml-auto flex items-center gap-2 pr-px">
        {netIcons.map((n) => <button key={n} aria-label={n}><Icon name={n} className="size-[22px]" /></button>)}
        <Tri dir="right" className="size-2 fill-[#8c8c8c]" />
      </div>
    </div>
    <div className="grow relative flex flex-col items-center justify-center pt-[83px] pl-1 bg-[#303030] text-[24px] leading-[34px] text-[#4d4d4d]">
      <h2 className="absolute top-4 right-[6px] text-[28px] leading-9 font-bold text-[#555]">Objects</h2>
      <p>Empty Network</p>
      <p>Press Tab to Add Objects</p>
    </div>
  </div>
);

export default function App() {
  return (
    <div className="h-screen flex flex-col overflow-hidden bg-[#2b2b2b] font-['Noto_Sans_CJK_SC',sans-serif] text-[#c9c9c9]">
      <Defs />
      <header className="flex items-center h-[29px] shrink-0 bg-white text-black">
        <Icon name="logo" className="size-[19px] -ml-[2px]" />
        <h1 className="pl-[5px] font-['Open_Sans',sans-serif] text-[16px] leading-7">untitled.hip - Houdini FX 18.5.563</h1>
        <div className="ml-auto -mr-1 flex items-center">
          <button aria-label="Minimize" className="w-[58px] flex justify-center"><svg viewBox="0 0 12 12" className="size-3"><path d="M0 6.500h12" stroke="#000" /></svg></button>
          <button aria-label="Restore" className="w-[58px] flex justify-center"><svg viewBox="0 0 12 12" className="size-3"><path d="M.5 2.500h9v9h-9zM2.500 2.500v-2h9v9h-2" stroke="#000" fill="none" /></svg></button>
          <button aria-label="Close" className="w-[58px] flex justify-center"><svg viewBox="0 0 12 12" className="size-3"><path d="m0 0 12 12M12 0 0 12" stroke="#000" /></svg></button>
        </div>
      </header>

      <div className="flex items-center h-8 shrink-0 pl-[8px] bg-linear-to-b from-[#3e3e3e] to-[#2f2f2f] border-b border-black text-[14px]">
        <nav className="flex gap-[13px] pl-[7px] w-[331px]">
          {['File', 'Edit', 'Render', 'Assets', 'Windows', 'Help'].map((m) => <button key={m}>{m}</button>)}
        </nav>
        <MenuSelect icon="desktop" label="Build" className="w-[160px]" />
        <MenuSelect icon="radial" label="Main" className="w-[160px] ml-1" />
        <div className="grow" />
        <MenuSelect icon="clapperDark" label="Main" className="w-[214px]" />
        <button aria-label="Help" className="ml-[9px] mr-1"><Icon name="help" className="size-5" /></button>
      </div>

      <div className="flex h-[72px] shrink-0 border-b border-black">
        <div className="w-2 shrink-0 pt-1 bg-[#3c3c3c] border-r border-black"><Tri dir="up" className="w-[6px] h-2 fill-black" /></div>
        <Shelf index={0} className="w-[876px] shrink-0" />
        <div className="w-[13px] shrink-0 flex items-center justify-center bg-[#444] border-x border-black"><span className="w-[6px] h-4 border-x-2 border-dotted border-black" /></div>
        <Shelf index={1} className="grow" />
      </div>

      <main className="flex grow min-h-0">
        <ScenePane />
        <div className="w-[6px] shrink-0 bg-[#484848] flex items-center justify-center"><span className="w-1 h-6 border-x-2 border-dotted border-[#777]" /></div>
        <SidePanes />
      </main>

      <PlayBar />
      <StatusBar />
    </div>
  );
}
